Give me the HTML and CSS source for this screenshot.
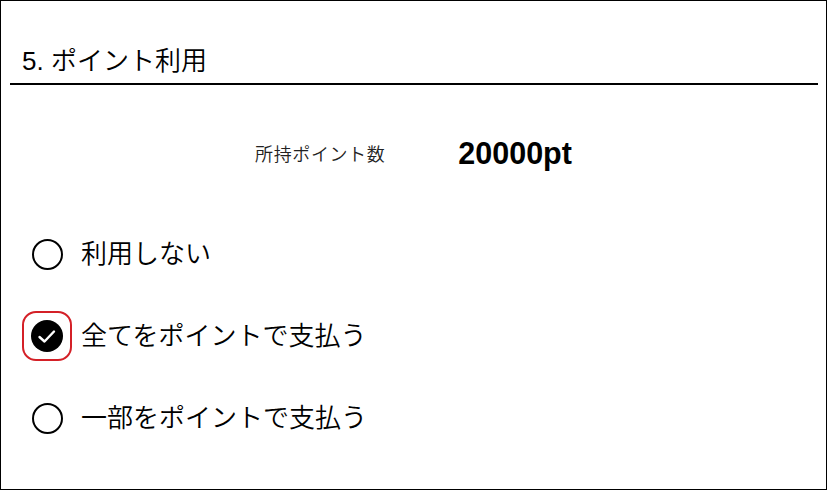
FILE: index.html
```html
<!DOCTYPE html>
<html lang="ja">
<head>
<meta charset="utf-8">
<title>ポイント利用</title>
<link rel="stylesheet" href="styles.css">
</head>
<body>
<div class="frame">
  <h2 class="title">5. ポイント利用</h2>
  <div class="points">
    <span class="points-label">所持ポイント数</span>
    <span class="points-value">20000pt</span>
  </div>
  <div class="options">
    <div class="option">
      <span class="ring"><span class="radio"></span></span>
      <span class="option-text">利用しない</span>
    </div>
    <div class="option">
      <span class="ring focused"><span class="radio checked"><svg viewBox="0 0 32 32" width="32" height="32"><path d="M8.5 17 L13.5 21.5 L23 11.5" fill="none" stroke="#fff" stroke-width="2.4" stroke-linecap="round" stroke-linejoin="round"/></svg></span></span>
      <span class="option-text">全てをポイントで支払う</span>
    </div>
    <div class="option">
      <span class="ring"><span class="radio"></span></span>
      <span class="option-text">一部をポイントで支払う</span>
    </div>
  </div>
</div>
</body>
</html>
```
FILE: styles.css
```css
html, body {
  margin: 0;
  padding: 0;
  background: #fff;
}
body {
  font-family: "Liberation Sans", "Noto Sans CJK JP", sans-serif;
  color: #000;
}
.frame {
  box-sizing: border-box;
  width: 827px;
  height: 490px;
  border: 1px solid #000;
}
.title {
  margin: 0 8px 0 9px;
  padding: 42px 0 4px 12px;
  font-size: 26px;
  line-height: 36px;
  font-weight: 350;
  color: #000;
  border-bottom: 2px solid #000;
}
.points {
  display: flex;
  justify-content: center;
  align-items: center;
  gap: 73px;
  height: 40px;
  margin-top: 48px;
}
.points-label {
  font-size: 18px;
  font-weight: 350;
  letter-spacing: 0.6px;
  color: #222;
}
.points-value {
  font-size: 30.5px;
  font-weight: 700;
}
.options {
  display: flex;
  flex-direction: column;
  gap: 32px;
  margin-top: 56px;
  padding-left: 21px;
}
.option {
  display: flex;
  align-items: center;
  height: 50px;
  gap: 9px;
}
.ring {
  box-sizing: border-box;
  width: 50px;
  height: 50px;
  border: 2px solid transparent;
  border-radius: 14px;
  display: flex;
  align-items: center;
  justify-content: center;
}
.ring.focused {
  border-color: #d42027;
}
.radio {
  box-sizing: border-box;
  width: 31px;
  height: 31px;
  border: 2px solid #000;
  border-radius: 50%;
  display: flex;
  align-items: center;
  justify-content: center;
}
.radio.checked {
  width: 32px;
  height: 32px;
  border: none;
  background: #000;
}
.option-text {
  font-size: 26px;
  line-height: 36px;
  font-weight: 350;
  color: #000;
}
```
